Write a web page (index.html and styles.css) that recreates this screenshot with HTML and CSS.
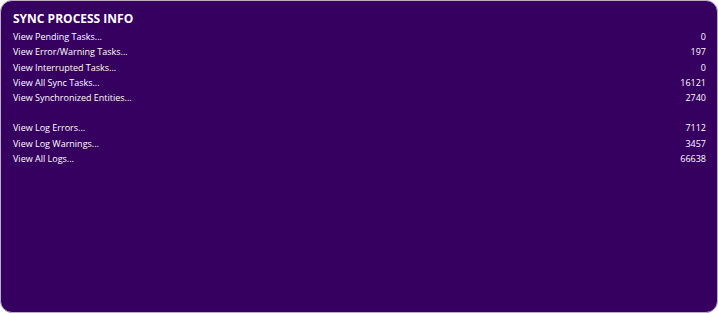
FILE: index.html
```html
<!DOCTYPE html>
<html>
<head>
<meta charset="utf-8">
<link rel="stylesheet" href="styles.css">
</head>
<body>
<div class="card">
  <h1 class="title">SYNC PROCESS INFO</h1>
  <div class="group">
    <div class="row"><span class="label">View Pending Tasks...</span><span class="value">0</span></div>
    <div class="row"><span class="label">View Error/Warning Tasks...</span><span class="value">197</span></div>
    <div class="row"><span class="label">View Interrupted Tasks...</span><span class="value">0</span></div>
    <div class="row"><span class="label">View All Sync Tasks...</span><span class="value">16121</span></div>
    <div class="row"><span class="label">View Synchronized Entities...</span><span class="value">2740</span></div>
  </div>
  <div class="group">
    <div class="row"><span class="label">View Log Errors...</span><span class="value">7112</span></div>
    <div class="row"><span class="label">View Log Warnings...</span><span class="value">3457</span></div>
    <div class="row"><span class="label">View All Logs...</span><span class="value">66638</span></div>
  </div>
</div>
</body>
</html>
```

FILE: styles.css
```css
html, body {
  margin: 0;
  padding: 0;
  background: #ffffff;
}
body {
  width: 718px;
  height: 313px;
  font-family: "Open Sans", "Noto Sans", sans-serif;
}
.card {
  box-sizing: border-box;
  width: 718px;
  height: 313px;
  background: #360060;
  border: 1px solid #b9aec6;
  border-radius: 12px;
  padding: 9px 11px 0 12px;
  color: #ffffff;
  display: flex;
  flex-direction: column;
  gap: 15px;
}
.title {
  margin: 0 0 -14px 0;
  font-size: 12px;
  font-weight: 700;
  line-height: 18px;
}
.group {
  display: flex;
  flex-direction: column;
}
.row {
  display: flex;
  justify-content: space-between;
  font-size: 9px;
  line-height: 15.3px;
}
```
